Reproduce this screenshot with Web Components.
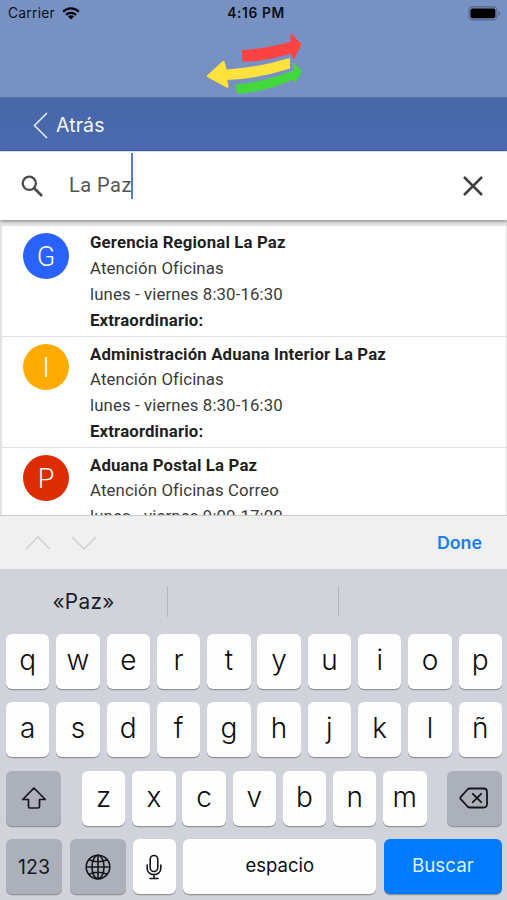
<!DOCTYPE html>
<html lang="es">
<head>
<meta charset="utf-8">
<title>Buscar oficinas</title>
<style>
html,body{margin:0;height:900px;overflow:hidden;background:#fff}
</style>
</head>
<body>
<phone-screen>
  <status-header></status-header>
  <nav-bar>Atrás</nav-bar>
  <search-field>La Paz</search-field>
  <office-list>
    <office-item letter="G" color="#2962ff" hours="lunes - viernes 8:30-16:30" place="Atención Oficinas" extra="Extraordinario:">Gerencia Regional La Paz</office-item>
    <office-item letter="I" color="#ffab00" hours="lunes - viernes 8:30-16:30" place="Atención Oficinas" extra="Extraordinario:">Administración Aduana Interior La Paz</office-item>
    <office-item letter="P" color="#dd2c00" hours="lunes - viernes 9:00-17:00" place="Atención Oficinas Correo">Aduana Postal La Paz</office-item>
  </office-list>
  <input-toolbar>Done</input-toolbar>
  <soft-keyboard></soft-keyboard>
</phone-screen>
<script>
const define = (name, html) => customElements.define(name, class extends HTMLElement {
  connectedCallback() {
    if (this.shadowRoot) return;
    const root = this.attachShadow({ mode: 'open' });
    root.innerHTML = typeof html === 'function' ? html(this) : html;
  }
});

define('phone-screen', `<style>
:host{display:flex;flex-direction:column;width:507px;height:900px;overflow:hidden;font-family:Inter,"Liberation Sans",sans-serif}
</style><slot></slot>`);

define('status-header', `<style>
:host{display:flex;flex-direction:column;height:97px;background:#7891c3;color:#0b0f18;flex:none}
.bar{display:grid;grid-template-columns:1fr auto 1fr;align-items:center;height:27px;padding:0 6px 0 8px;font-size:13.8px;line-height:27px}
.left{display:flex;align-items:center;gap:7px}
.left span{letter-spacing:.25px}
.time{font-weight:600;font-size:13.8px;letter-spacing:.6px;margin-left:3px}
.right{display:flex;justify-content:flex-end}
.logo{display:block;margin:5px 0 0 200px}
svg{display:block}
</style>
<div class="bar">
 <div class="left"><span>Carrier</span>
 <svg width="18" height="13" viewBox="0 0 18 13"><g fill="none" stroke="#05070c" stroke-width="2.3"><path d="M1.2 4.7a11 11 0 0 1 15.6 0"/><path d="M4 7.9a7.1 7.1 0 0 1 10 0"/></g><path d="M9 12.6 5.9 9.5a4.4 4.4 0 0 1 6.2 0z" fill="#05070c"/></svg></div>
 <div class="time">4:16 PM</div>
 <div class="right"><svg width="33" height="15" viewBox="0 0 33 15"><rect x=".9" y=".9" width="28" height="13" rx="3.6" fill="none" stroke="#53658c" stroke-width="1.1"/><rect x="2.4" y="2.6" width="25" height="9.600" rx="2" fill="#000"/><path d="M30.7 5v5c1-.4 1.500-1.300 1.500-2.500s-.5-2.100-1.500-2.500z" fill="#53658c"/></svg></div>
</div>
<svg class="logo" width="110" height="65" viewBox="200 32 110 65">
 <path d="M242.500 50Q268 48.500 291 41.500L290.300 35Q290.500 33 292 34.500L301.500 44.200L294.500 58.200Q293.300 60 292.700 58L290.500 53.500Q269 61 244 61.700Q242.500 61.700 242.300 60.500L241.600 51.200Q241.500 50 242.500 50Z" fill="#ff4242"/>
 <path d="M207 75.500L222 61.800Q224.500 59.800 225 63L226.500 69.500Q259 67.500 288.500 58.300Q290 58 290 59.500V68.500Q259 78.500 227.300 80L228.500 86Q228.700 88.500 226.500 87.500L207.500 77.300Q206.200 76.500 207 75.500Z" fill="#ffe23d"/>
 <path d="M235.600 84.500Q268 81 294.500 70L293.200 65.500Q293 63 294.500 64.200L301.500 70.200Q302 71 301.500 71.800L296.300 81.500Q295 84 294.200 81.800L293 79.500Q268 91 239 93.800Q237 94 236.800 92.500Z" fill="#43d83c"/>
</svg>`);

define('nav-bar', `<style>
:host{display:flex;align-items:center;gap:8px;height:54px;flex:none;box-sizing:border-box;padding-left:33px;padding-top:2px;background:linear-gradient(#4867a9,#4b6aaf);border-top:1px solid #4e6cab;color:#f5f8ff;font-size:19.5px;letter-spacing:.1px;line-height:51px}
svg{display:block}
</style>
<svg width="15" height="27" viewBox="0 0 15 27"><path d="M14 1 1.500 13.500 14 26" fill="none" stroke="#e8eefb" stroke-width="1.500"/></svg><span><slot></slot></span>`);

define('search-field', `<style>
:host{display:flex;align-items:center;height:69px;flex:none;box-sizing:border-box;background:#fff;border-top:1px solid #d5dbe9;padding:0 22px 0 20px;color:#555;font:20px/66px Roboto,sans-serif;position:relative;z-index:1;box-shadow:0 1px 3px rgba(0,0,0,.55)}
svg{display:block}
.text{margin:-2px 0 0 25px;flex:1;display:flex;align-items:center;letter-spacing:.5px}
.caret{width:2px;height:46px;background:#5277e0;margin:-19px 0 0 -1px}
</style>
<svg width="24" height="24" viewBox="0 0 24 24"><circle cx="9.300" cy="9.300" r="6.600" fill="none" stroke="#4a4a4a" stroke-width="2.300"/><path d="m14 14 8 8" stroke="#4a4a4a" stroke-width="2.700"/></svg>
<div class="text"><slot></slot><i class="caret"></i></div>
<svg width="24" height="24" viewBox="0 0 24 24"><path d="m3 3 18 18M21 3 3 21" fill="none" stroke="#414141" stroke-width="2.500"/></svg>`);

define('office-list', `<style>
:host{display:block;flex:none;height:294px;margin-top:1px;box-sizing:border-box;overflow:hidden;border:solid #e2e2e2;border-width:5px 1px 0 2px;background:#fff}
</style><slot></slot>`);

define('office-item', el => `<style>
:host{display:flex;align-items:flex-start;height:111.2px;box-sizing:border-box;border-bottom:1px solid #dedede;padding-left:21px;gap:21px;font:16.8px/25.7px Roboto,sans-serif;letter-spacing:.12px;color:#3a3a3a}
.avatar{display:flex;align-items:center;justify-content:center;width:46px;height:46px;border-radius:50%;margin-top:7px;background:${el.getAttribute('color')};color:#fff;font-size:27px;font-weight:300;letter-spacing:0}
.avatar span{padding-top:3px}
.info{padding-top:4.400px;white-space:nowrap}
b{font-weight:700;color:#1f1f1f;letter-spacing:.15px}
</style>
<div class="avatar"><span>${el.getAttribute('letter')}</span></div>
<div class="info"><b><slot></slot></b><div>${el.getAttribute('place')}</div><div>${el.getAttribute('hours')}</div>${el.hasAttribute('extra') ? `<b>${el.getAttribute('extra')}</b>` : ''}</div>`);

define('input-toolbar', `<style>
:host{display:flex;align-items:center;height:54px;flex:none;box-sizing:border-box;border-top:1px solid #c9cacc;background:#f0f0f1;padding:0 25px 0 25px;gap:20px;font-size:17.800px;font-weight:600;color:#157efb}
svg{display:block}span{margin-left:auto}
</style>
<svg width="26" height="16" viewBox="0 0 26 16"><path d="M1 14 13 2l12 12" fill="none" stroke="#d2d3d5" stroke-width="1.600"/></svg>
<svg width="26" height="16" viewBox="0 0 26 16"><path d="M1 2l12 12L25 2" fill="none" stroke="#d2d3d5" stroke-width="1.600"/></svg>
<span><slot></slot></span>`);

define('key-cap', `<style>
:host{display:flex;align-items:center;justify-content:center;box-sizing:border-box;height:55px;width:43.400px;border-radius:6px;background:#fefefe;box-shadow:0 1.300px 0 #929498;color:#0d0d0f;font-size:28px;font-weight:350;padding-bottom:3px}
:host([tone=gray]){background:#abb0bb;font-size:19.500px;font-weight:400;padding:0;color:#16181d}
:host([tone=blue]){background:#007aff;color:#dfefff;font-size:18.800px;font-weight:400}
:host([small]){font-size:18.500px;font-weight:400}
:host([icon]){padding:0}
::slotted(svg){display:block}
</style><slot></slot>`);

const keys = s => [...s].map(c => `<key-cap>${c}</key-cap>`).join('');
define('soft-keyboard', `<style>
:host{display:flex;flex-direction:column;flex:1;background:#d0d3da}
.hints{display:grid;grid-template-columns:168px 171px 1fr;height:65px;align-items:center;text-align:center;font-size:20.800px;letter-spacing:.3px;color:#1c1e22}
.hints div{height:31px;line-height:31px;border-right:1px solid #b4b7be}
.hints div:last-child{border:0}
.row{display:flex;justify-content:space-between;padding:0 5px 0 6px;height:55px;margin-bottom:13.400px}
.mid{display:flex;gap:6.800px;margin-left:.5px}
.bottom{justify-content:flex-start;gap:7.600px}
svg{fill:none;stroke:#14161b}
</style>
<div class="hints"><div>«Paz»</div><div></div><div></div></div>
<div class="row">${keys('qwertyuiop')}</div>
<div class="row">${keys('asdfghjklñ')}</div>
<div class="row"><key-cap tone="gray" style="width:55px"><svg width="26" height="24" viewBox="0 0 26 24" stroke-width="1.700" stroke-linejoin="round"><path d="M13 2 24.300 13.500H18.500V20.500Q18.500 22 17 22H9Q7.500 22 7.500 20.500V13.500H1.700Z"/></svg></key-cap>
<div class="mid">${keys('zxcvbnm')}</div>
<key-cap tone="gray" style="width:55px"><svg width="30" height="22" viewBox="0 0 30 22" stroke-width="1.800" stroke-linejoin="round" stroke-linecap="round"><path d="M11 1.500H24.500Q28 1.500 28 5V17Q28 20.500 24.500 20.500H11Q9.500 20.500 8.500 19.500L1.800 12.200Q.8 11 1.800 9.800L8.500 2.500Q9.500 1.500 11 1.500Z"/><path d="m13.800 6.800 8.400 8.400m0-8.400-8.400 8.400"/></svg></key-cap></div>
<div class="row bottom"><key-cap tone="gray" style="width:56px">123</key-cap>
<key-cap tone="gray" style="width:56px"><svg width="26" height="26" viewBox="0 0 26 26" stroke-width="1.600"><circle cx="13" cy="13" r="11.800"/><ellipse cx="13" cy="13" rx="6" ry="11.800"/><path d="M13 1.200v23.600M1.200 13h23.600M3.800 5.800q9.200 4 18.400 0M3.800 20.200q9.200-4 18.400 0"/></svg></key-cap>
<key-cap icon style="width:42.500px"><svg width="16" height="26" viewBox="0 0 16 26" stroke-width="1.600" stroke-linecap="round"><rect x="4.200" y="1.500" width="7.600" height="16" rx="3.800"/><path d="M1.200 11v3.500a6.800 6.100 0 0 0 13.600 0V11M8 20.800v3.700M4 24.500h8"/></svg></key-cap>
<key-cap small style="width:193px">espacio</key-cap>
<key-cap tone="blue" style="width:118px">Buscar</key-cap></div>`);
</script>
</body>
</html>
